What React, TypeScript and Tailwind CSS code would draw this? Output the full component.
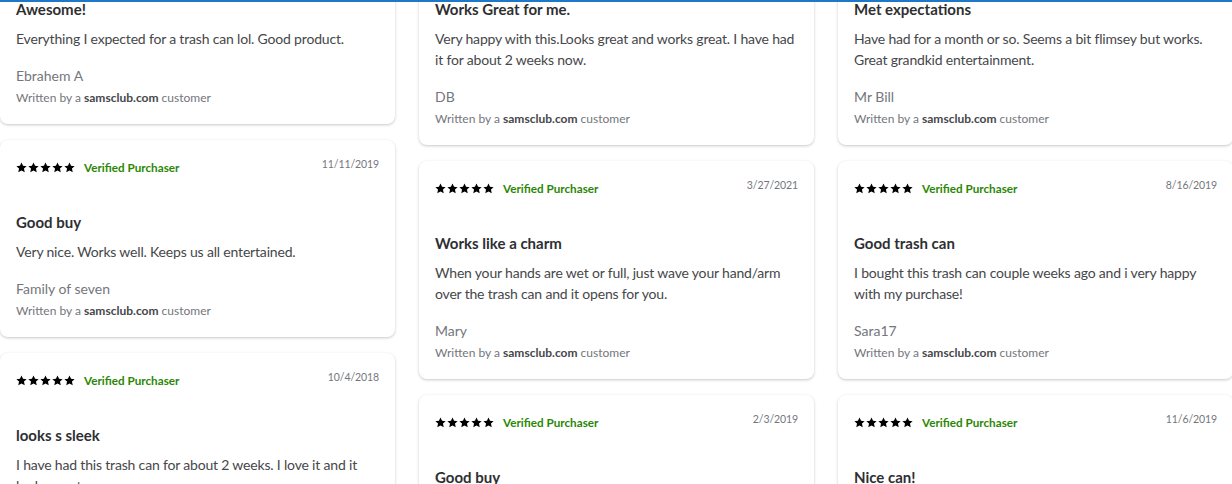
import React from "react";

type Review = {
  date: string;
  title: string;
  body: string;
  name: string;
};

const columns: Review[][] = [
  [
    {
      date: "12/2/2019",
      title: "Awesome!",
      body: "Everything I expected for a trash can lol. Good product.",
      name: "Ebrahem A",
    },
    {
      date: "11/11/2019",
      title: "Good buy",
      body: "Very nice. Works well. Keeps us all entertained.",
      name: "Family of seven",
    },
    {
      date: "10/4/2018",
      title: "looks s sleek",
      body: "I have had this trash can for about 2 weeks. I love it and it looks great.",
      name: "Kim",
    },
  ],
  [
    {
      date: "4/14/2021",
      title: "Works Great for me.",
      body: "Very happy with this.Looks great and works great. I have had it for about 2 weeks now.",
      name: "DB",
    },
    {
      date: "3/27/2021",
      title: "Works like a charm",
      body: "When your hands are wet or full, just wave your hand/arm over the trash can and it opens for you.",
      name: "Mary",
    },
    {
      date: "2/3/2019",
      title: "Good buy",
      body: "Works great and looks good in the kitchen.",
      name: "Jen",
    },
  ],
  [
    {
      date: "1/20/2020",
      title: "Met expectations",
      body: "Have had for a month or so. Seems a bit flimsey but works. Great grandkid entertainment.",
      name: "Mr Bill",
    },
    {
      date: "8/16/2019",
      title: "Good trash can",
      body: "I bought this trash can couple weeks ago and i very happy with my purchase!",
      name: "Sara17",
    },
    {
      date: "11/6/2019",
      title: "Nice can!",
      body: "Love the motion sensor, easy to use.",
      name: "Tom",
    },
  ],
];

function Star() {
  return (
    <svg viewBox="0 0 24 24" width="11" height="11" aria-hidden="true">
      <path
        fill="#000"
        d="M12 1l3.4 7.1 7.8.9-5.8 5.4 1.6 7.8L12 18.3l-7 3.9 1.6-7.8L.8 9l7.8-.9z"
      />
    </svg>
  );
}

function ReviewCard({ review }: { review: Review }) {
  return (
    <div className="rounded-lg bg-white px-4 pb-[18px] pt-[17px] shadow-[0_1px_3px_rgba(0,0,0,0.22)]">
      <div className="flex items-start justify-between">
        <div className="mt-[3px] flex items-center">
          <div className="flex gap-px">
            {[0, 1, 2, 3, 4].map((i) => (
              <Star key={i} />
            ))}
          </div>
          <span className="ml-[9px] text-[11.7px] font-bold leading-[14px] text-[#2a8703]">
            Verified Purchaser
          </span>
        </div>
        <span className="text-[10.5px] leading-[14px] tracking-[-0.1px] text-[#74767c]">
          {review.date}
        </span>
      </div>
      <h3 className="mt-[38px] text-[15px] font-bold leading-[20px] text-[#2e2f32]">
        {review.title}
      </h3>
      <p className="mt-[9px] text-[14px] leading-[21px] tracking-[-0.18px] text-[#46474a]">
        {review.body}
      </p>
      <p className="mt-[17px] text-[14px] leading-[20px] text-[#74767c]">{review.name}</p>
      <p className="mt-[4px] text-[12px] leading-[16px] text-[#74767c]">
        Written by a <span className="font-bold text-[#46474a]">samsclub.com</span> customer
      </p>
    </div>
  );
}

export default function App() {
  return (
    <div
      className="relative h-[484px] w-[1232px] overflow-hidden bg-white"
      style={{ fontFamily: "Lato, 'Noto Sans', sans-serif" }}
    >
      <div className="absolute inset-x-0 top-0 z-10 h-[2px] bg-[#1e77c8]" />
      <div className="-mt-[73px] grid w-[1233px] grid-cols-3 items-start gap-x-6">
        {columns.map((col, ci) => (
          <div key={ci} className="flex flex-col gap-4">
            {col.map((r) => (
              <ReviewCard key={r.title + r.date} review={r} />
            ))}
          </div>
        ))}
      </div>
    </div>
  );
}
